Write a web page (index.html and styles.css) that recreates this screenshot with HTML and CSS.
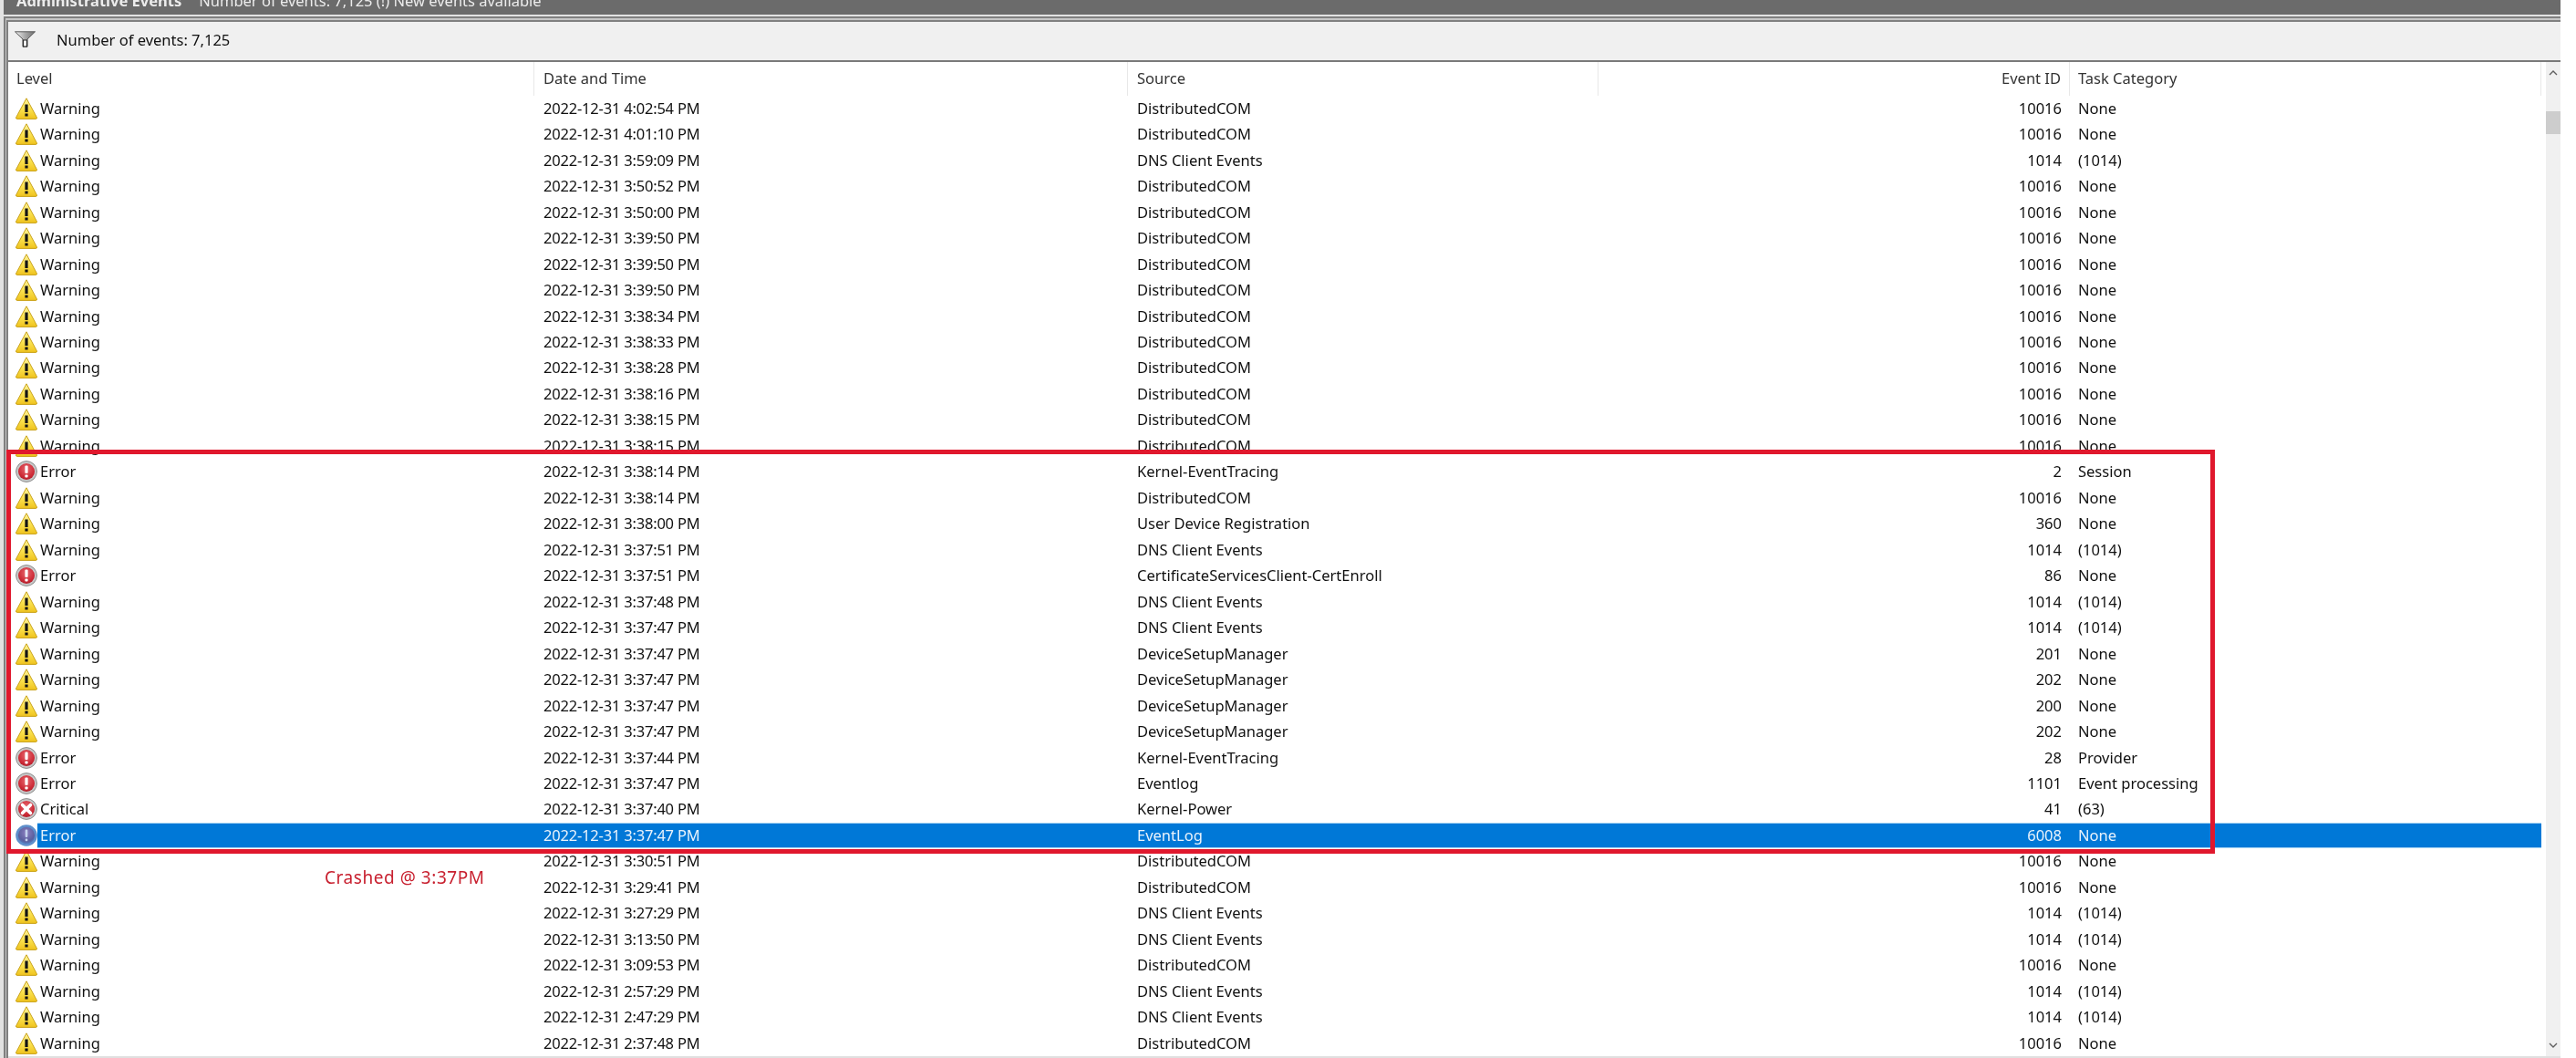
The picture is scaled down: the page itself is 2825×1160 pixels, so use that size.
FILE: index.html
```html
<!DOCTYPE html>
<html lang="en">
<head>
  <meta charset="UTF-8" />
  <title>Administrative Events</title>
  <link rel="stylesheet" href="styles.css">
</head>
<body>

  <!-- icon sprites -->
  <svg class="sprites" width="0" height="0">
    <defs>
      <linearGradient id="g-warn" x1="0" y1="0" x2="0" y2="1">
        <stop offset="0" stop-color="#fdf3a0" />
        <stop offset="0.55" stop-color="#fae04a" />
        <stop offset="1" stop-color="#efc21e" />
      </linearGradient>
      <linearGradient id="g-funnel" x1="0" y1="0" x2="1" y2="0">
        <stop offset="0" stop-color="#f2f2f2" />
        <stop offset="0.5" stop-color="#a8a8a8" />
        <stop offset="1" stop-color="#6e6e6e" />
      </linearGradient>
      <radialGradient id="g-red" cx="0.5" cy="0.35" r="0.7">
        <stop offset="0" stop-color="#e8686e" />
        <stop offset="0.7" stop-color="#cc2a36" />
        <stop offset="1" stop-color="#a81c28" />
      </radialGradient>
      <radialGradient id="g-blue" cx="0.5" cy="0.35" r="0.7">
        <stop offset="0" stop-color="#8d7fc0" />
        <stop offset="0.7" stop-color="#5a5f9e" />
        <stop offset="1" stop-color="#4f86c8" />
      </radialGradient>
      <symbol id="i-warn" viewBox="0 0 24 24">
        <path d="M12 0.8 L23.4 21.8 Q23.8 23.4 22.2 23.4 L1.8 23.4 Q0.2 23.4 0.6 21.8 Z" fill="url(#g-warn)" stroke="#c9a21a" stroke-width="1" stroke-linejoin="round" />
        <rect x="10.4" y="7.5" width="3.2" height="8.5" fill="#141414" />
        <rect x="10.4" y="17.5" width="3.2" height="3" fill="#141414" />
      </symbol>
      <symbol id="i-error" viewBox="0 0 24 24">
        <circle cx="12" cy="12" r="11.4" fill="#c8c8c8" stroke="#8c8c8c" stroke-width="1" />
        <circle cx="12" cy="12" r="9" fill="url(#g-red)" />
        <rect x="10.4" y="5.5" width="3.2" height="8.5" rx="1" fill="#fff" />
        <rect x="10.4" y="15.5" width="3.2" height="3" rx="1" fill="#fff" />
      </symbol>
      <symbol id="i-critical" viewBox="0 0 24 24">
        <circle cx="12" cy="12" r="11.4" fill="#c8c8c8" stroke="#8c8c8c" stroke-width="1" />
        <circle cx="12" cy="12" r="9" fill="url(#g-red)" />
        <path d="M7.5 7.5 L16.5 16.5 M16.5 7.5 L7.5 16.5" stroke="#fff" stroke-width="3.6" stroke-linecap="round" />
      </symbol>
      <symbol id="i-selected" viewBox="0 0 24 24">
        <circle cx="12" cy="12" r="11.8" fill="#5e8fcb" />
        <circle cx="12" cy="12" r="9.2" fill="url(#g-blue)" />
        <rect x="10.7" y="5.5" width="2.6" height="8.5" rx="1" fill="#c5d3ee" />
        <rect x="10.7" y="15.5" width="2.6" height="2.8" rx="1" fill="#c5d3ee" />
      </symbol>
    </defs>
  </svg>

  <div class="viewer">
    <div class="title-bar">
      <strong>Administrative Events</strong>
      <span>Number of events: 7,125 (!) New events available</span>
    </div>

    <div class="pane">
      <div class="filter-bar">
        <svg class="filter-icon" viewBox="0 0 23 18">
          <path d="M0.5 0.8 H22.5 L14 9 V17.2 H9 V9 Z" fill="url(#g-funnel)" stroke="#5a5a5a" stroke-width="1" />
          <path d="M9.5 10 V17 H13.5 V10 Z" fill="#fafafa" stroke="#2a2a2a" stroke-width="1.2" />
        </svg>
        <span>Number of events: 7,125</span>
      </div>

      <div class="grid">
        <div class="list">
          <div class="head">
            <div class="hc-level">Level</div>
            <div class="hc-date">Date and Time</div>
            <div class="hc-source">Source</div>
            <div class="hc-id">Event ID</div>
            <div class="hc-task">Task Category</div>
          </div>

          <div class="rows">
            <div class="row"><svg class="ico"><use href="#i-warn" /></svg><div class="cells"><div class="c-level">Warning</div><div class="c-date">2022-12-31 4:02:54 PM</div><div class="c-source">DistributedCOM</div><div class="c-id">10016</div><div class="c-task">None</div></div></div>
            <div class="row"><svg class="ico"><use href="#i-warn" /></svg><div class="cells"><div class="c-level">Warning</div><div class="c-date">2022-12-31 4:01:10 PM</div><div class="c-source">DistributedCOM</div><div class="c-id">10016</div><div class="c-task">None</div></div></div>
            <div class="row"><svg class="ico"><use href="#i-warn" /></svg><div class="cells"><div class="c-level">Warning</div><div class="c-date">2022-12-31 3:59:09 PM</div><div class="c-source">DNS Client Events</div><div class="c-id">1014</div><div class="c-task">(1014)</div></div></div>
            <div class="row"><svg class="ico"><use href="#i-warn" /></svg><div class="cells"><div class="c-level">Warning</div><div class="c-date">2022-12-31 3:50:52 PM</div><div class="c-source">DistributedCOM</div><div class="c-id">10016</div><div class="c-task">None</div></div></div>
            <div class="row"><svg class="ico"><use href="#i-warn" /></svg><div class="cells"><div class="c-level">Warning</div><div class="c-date">2022-12-31 3:50:00 PM</div><div class="c-source">DistributedCOM</div><div class="c-id">10016</div><div class="c-task">None</div></div></div>
            <div class="row"><svg class="ico"><use href="#i-warn" /></svg><div class="cells"><div class="c-level">Warning</div><div class="c-date">2022-12-31 3:39:50 PM</div><div class="c-source">DistributedCOM</div><div class="c-id">10016</div><div class="c-task">None</div></div></div>
            <div class="row"><svg class="ico"><use href="#i-warn" /></svg><div class="cells"><div class="c-level">Warning</div><div class="c-date">2022-12-31 3:39:50 PM</div><div class="c-source">DistributedCOM</div><div class="c-id">10016</div><div class="c-task">None</div></div></div>
            <div class="row"><svg class="ico"><use href="#i-warn" /></svg><div class="cells"><div class="c-level">Warning</div><div class="c-date">2022-12-31 3:39:50 PM</div><div class="c-source">DistributedCOM</div><div class="c-id">10016</div><div class="c-task">None</div></div></div>
            <div class="row"><svg class="ico"><use href="#i-warn" /></svg><div class="cells"><div class="c-level">Warning</div><div class="c-date">2022-12-31 3:38:34 PM</div><div class="c-source">DistributedCOM</div><div class="c-id">10016</div><div class="c-task">None</div></div></div>
            <div class="row"><svg class="ico"><use href="#i-warn" /></svg><div class="cells"><div class="c-level">Warning</div><div class="c-date">2022-12-31 3:38:33 PM</div><div class="c-source">DistributedCOM</div><div class="c-id">10016</div><div class="c-task">None</div></div></div>
            <div class="row"><svg class="ico"><use href="#i-warn" /></svg><div class="cells"><div class="c-level">Warning</div><div class="c-date">2022-12-31 3:38:28 PM</div><div class="c-source">DistributedCOM</div><div class="c-id">10016</div><div class="c-task">None</div></div></div>
            <div class="row"><svg class="ico"><use href="#i-warn" /></svg><div class="cells"><div class="c-level">Warning</div><div class="c-date">2022-12-31 3:38:16 PM</div><div class="c-source">DistributedCOM</div><div class="c-id">10016</div><div class="c-task">None</div></div></div>
            <div class="row"><svg class="ico"><use href="#i-warn" /></svg><div class="cells"><div class="c-level">Warning</div><div class="c-date">2022-12-31 3:38:15 PM</div><div class="c-source">DistributedCOM</div><div class="c-id">10016</div><div class="c-task">None</div></div></div>
            <div class="row"><svg class="ico"><use href="#i-warn" /></svg><div class="cells"><div class="c-level">Warning</div><div class="c-date">2022-12-31 3:38:15 PM</div><div class="c-source">DistributedCOM</div><div class="c-id">10016</div><div class="c-task">None</div></div></div>
            <div class="row"><svg class="ico"><use href="#i-error" /></svg><div class="cells"><div class="c-level">Error</div><div class="c-date">2022-12-31 3:38:14 PM</div><div class="c-source">Kernel-EventTracing</div><div class="c-id">2</div><div class="c-task">Session</div></div></div>
            <div class="row"><svg class="ico"><use href="#i-warn" /></svg><div class="cells"><div class="c-level">Warning</div><div class="c-date">2022-12-31 3:38:14 PM</div><div class="c-source">DistributedCOM</div><div class="c-id">10016</div><div class="c-task">None</div></div></div>
            <div class="row"><svg class="ico"><use href="#i-warn" /></svg><div class="cells"><div class="c-level">Warning</div><div class="c-date">2022-12-31 3:38:00 PM</div><div class="c-source">User Device Registration</div><div class="c-id">360</div><div class="c-task">None</div></div></div>
            <div class="row"><svg class="ico"><use href="#i-warn" /></svg><div class="cells"><div class="c-level">Warning</div><div class="c-date">2022-12-31 3:37:51 PM</div><div class="c-source">DNS Client Events</div><div class="c-id">1014</div><div class="c-task">(1014)</div></div></div>
            <div class="row"><svg class="ico"><use href="#i-error" /></svg><div class="cells"><div class="c-level">Error</div><div class="c-date">2022-12-31 3:37:51 PM</div><div class="c-source">CertificateServicesClient-CertEnroll</div><div class="c-id">86</div><div class="c-task">None</div></div></div>
            <div class="row"><svg class="ico"><use href="#i-warn" /></svg><div class="cells"><div class="c-level">Warning</div><div class="c-date">2022-12-31 3:37:48 PM</div><div class="c-source">DNS Client Events</div><div class="c-id">1014</div><div class="c-task">(1014)</div></div></div>
            <div class="row"><svg class="ico"><use href="#i-warn" /></svg><div class="cells"><div class="c-level">Warning</div><div class="c-date">2022-12-31 3:37:47 PM</div><div class="c-source">DNS Client Events</div><div class="c-id">1014</div><div class="c-task">(1014)</div></div></div>
            <div class="row"><svg class="ico"><use href="#i-warn" /></svg><div class="cells"><div class="c-level">Warning</div><div class="c-date">2022-12-31 3:37:47 PM</div><div class="c-source">DeviceSetupManager</div><div class="c-id">201</div><div class="c-task">None</div></div></div>
            <div class="row"><svg class="ico"><use href="#i-warn" /></svg><div class="cells"><div class="c-level">Warning</div><div class="c-date">2022-12-31 3:37:47 PM</div><div class="c-source">DeviceSetupManager</div><div class="c-id">202</div><div class="c-task">None</div></div></div>
            <div class="row"><svg class="ico"><use href="#i-warn" /></svg><div class="cells"><div class="c-level">Warning</div><div class="c-date">2022-12-31 3:37:47 PM</div><div class="c-source">DeviceSetupManager</div><div class="c-id">200</div><div class="c-task">None</div></div></div>
            <div class="row"><svg class="ico"><use href="#i-warn" /></svg><div class="cells"><div class="c-level">Warning</div><div class="c-date">2022-12-31 3:37:47 PM</div><div class="c-source">DeviceSetupManager</div><div class="c-id">202</div><div class="c-task">None</div></div></div>
            <div class="row"><svg class="ico"><use href="#i-error" /></svg><div class="cells"><div class="c-level">Error</div><div class="c-date">2022-12-31 3:37:44 PM</div><div class="c-source">Kernel-EventTracing</div><div class="c-id">28</div><div class="c-task">Provider</div></div></div>
            <div class="row"><svg class="ico"><use href="#i-error" /></svg><div class="cells"><div class="c-level">Error</div><div class="c-date">2022-12-31 3:37:47 PM</div><div class="c-source">Eventlog</div><div class="c-id">1101</div><div class="c-task">Event processing</div></div></div>
            <div class="row"><svg class="ico"><use href="#i-critical" /></svg><div class="cells"><div class="c-level">Critical</div><div class="c-date">2022-12-31 3:37:40 PM</div><div class="c-source">Kernel-Power</div><div class="c-id">41</div><div class="c-task">(63)</div></div></div>
            <div class="row selected"><svg class="ico"><use href="#i-selected" /></svg><div class="cells"><div class="c-level">Error</div><div class="c-date">2022-12-31 3:37:47 PM</div><div class="c-source">EventLog</div><div class="c-id">6008</div><div class="c-task">None</div></div></div>
            <div class="row"><svg class="ico"><use href="#i-warn" /></svg><div class="cells"><div class="c-level">Warning</div><div class="c-date">2022-12-31 3:30:51 PM</div><div class="c-source">DistributedCOM</div><div class="c-id">10016</div><div class="c-task">None</div></div></div>
            <div class="row"><svg class="ico"><use href="#i-warn" /></svg><div class="cells"><div class="c-level">Warning</div><div class="c-date">2022-12-31 3:29:41 PM</div><div class="c-source">DistributedCOM</div><div class="c-id">10016</div><div class="c-task">None</div></div></div>
            <div class="row"><svg class="ico"><use href="#i-warn" /></svg><div class="cells"><div class="c-level">Warning</div><div class="c-date">2022-12-31 3:27:29 PM</div><div class="c-source">DNS Client Events</div><div class="c-id">1014</div><div class="c-task">(1014)</div></div></div>
            <div class="row"><svg class="ico"><use href="#i-warn" /></svg><div class="cells"><div class="c-level">Warning</div><div class="c-date">2022-12-31 3:13:50 PM</div><div class="c-source">DNS Client Events</div><div class="c-id">1014</div><div class="c-task">(1014)</div></div></div>
            <div class="row"><svg class="ico"><use href="#i-warn" /></svg><div class="cells"><div class="c-level">Warning</div><div class="c-date">2022-12-31 3:09:53 PM</div><div class="c-source">DistributedCOM</div><div class="c-id">10016</div><div class="c-task">None</div></div></div>
            <div class="row"><svg class="ico"><use href="#i-warn" /></svg><div class="cells"><div class="c-level">Warning</div><div class="c-date">2022-12-31 2:57:29 PM</div><div class="c-source">DNS Client Events</div><div class="c-id">1014</div><div class="c-task">(1014)</div></div></div>
            <div class="row"><svg class="ico"><use href="#i-warn" /></svg><div class="cells"><div class="c-level">Warning</div><div class="c-date">2022-12-31 2:47:29 PM</div><div class="c-source">DNS Client Events</div><div class="c-id">1014</div><div class="c-task">(1014)</div></div></div>
            <div class="row"><svg class="ico"><use href="#i-warn" /></svg><div class="cells"><div class="c-level">Warning</div><div class="c-date">2022-12-31 2:37:48 PM</div><div class="c-source">DistributedCOM</div><div class="c-id">10016</div><div class="c-task">None</div></div></div>

            <!-- annotation drawn over the list -->
            <div class="red-box"></div>
            <div class="crash-note">Crashed @ 3:37PM</div>
          </div>
        </div>

        <div class="scrollbar">
          <svg class="chevron" viewBox="0 0 12 8"><path d="M2 6 L6 2 L10 6" fill="none" stroke="#606060" stroke-width="1.4" /></svg>
          <div class="track"><div class="thumb"></div></div>
          <svg class="chevron" viewBox="0 0 12 8"><path d="M2 2 L6 6 L10 2" fill="none" stroke="#606060" stroke-width="1.4" /></svg>
        </div>
      </div>
    </div>
  </div>

</body>
</html>
```

FILE: styles.css
```css
/* Reset & base */
* {
  box-sizing: border-box;
}
html, body {
  margin: 0;
  height: 100%;
  overflow: hidden;
  background: #ffffff;
}
body {
  font-family: "Noto Sans", "Open Sans", sans-serif;
  font-size: 16.5px;
  color: #111111;
}
.sprites {
  position: absolute;
}
/* the source capture is soft, so the whole window gets a touch of blur */
.viewer {
  width: 2808px;
  height: 1160px;
  padding-left: 4px;
  overflow: hidden;
  background: #e2e2e2;
  filter: blur(0.35px);
}
/* Title bar, cut off by the top of the screenshot */
.title-bar {
  height: 16px;
  background: #6b6b6b;
  color: #ececec;
  display: flex;
  gap: 19px;
  padding-left: 14px;
  line-height: 26px;
  overflow: hidden;
}
.title-bar strong,
.title-bar span {
  margin-top: -12px;
}
.pane {
  margin-top: 2px;
  height: 1142px;
  border-top: 6px double #808080;
  border-left: 5px double #808080;
  background: #c6c6c6;
  display: flex;
  flex-direction: column;
}
.filter-bar {
  height: 44px;
  flex: none;
  background: #f0f0f0;
  border-bottom: 2px solid #7a7a7a;
  display: flex;
  align-items: center;
  gap: 23px;
  padding: 0 0 4px 7px;
}
.filter-icon {
  width: 23px;
  height: 18px;
}
.grid {
  flex: 1;
  display: flex;
  background: #ffffff;
  border-bottom: 2px solid #e0e0e0;
  min-height: 0;
}
.list {
  width: 2778px;
  flex: none;
}
.head {
  height: 36.8px;
  display: grid;
  grid-template-columns: 577px 651px 516px 517px 517px;
  line-height: 36px;
  color: #333333;
}
.head > div {
  border-right: 1px solid #e8e8e8;
}
.hc-level {
  padding-left: 9px;
}
.hc-date, .hc-source {
  padding-left: 10px;
}
.hc-id {
  text-align: right;
  padding-right: 9px;
}
.hc-task {
  padding-left: 9px;
}
/* Rows */
.rows {
  position: relative;
}
.row {
  height: 28.47px;
  display: flex;
  padding-left: 8px;
  line-height: 27.5px;
}
.ico {
  width: 24px;
  height: 24px;
  margin-top: 2px;
  flex: none;
}
.cells {
  flex: 1;
  display: grid;
  grid-template-columns: 545px 651px 516px 517px 517px;
}
.c-level {
  padding-left: 3px;
}
.c-date {
  padding-left: 10px;
  letter-spacing: -0.2px;
}
.c-source {
  padding-left: 10px;
}
.c-id {
  text-align: right;
  padding-right: 9px;
}
.c-task {
  padding-left: 9px;
}
.row.selected .cells {
  background: #0078d7;
  color: #e8f2fb;
  border-top: 1px solid #a5d3f2;
  border-bottom: 1px solid #a5d3f2;
  line-height: 26px;
}
/* Annotation */
.red-box {
  position: absolute;
  left: -2px;
  top: 388px;
  width: 2422px;
  height: 443px;
  border: 5px solid #e0182d;
}
.crash-note {
  position: absolute;
  left: 347px;
  top: 844px;
  color: #c8202f;
  font-size: 19px;
  letter-spacing: 0.55px;
}
/* Scrollbar */
.scrollbar {
  margin-left: 5px;
  width: 16px;
  background: #f0f0f0;
  display: flex;
  flex-direction: column;
}
.chevron {
  width: 12px;
  height: 8px;
  margin: 8px 2px;
  flex: none;
}
.track {
  flex: 1;
  padding-top: 30px;
}
.thumb {
  height: 25px;
  background: #cdcdcd;
}
```
